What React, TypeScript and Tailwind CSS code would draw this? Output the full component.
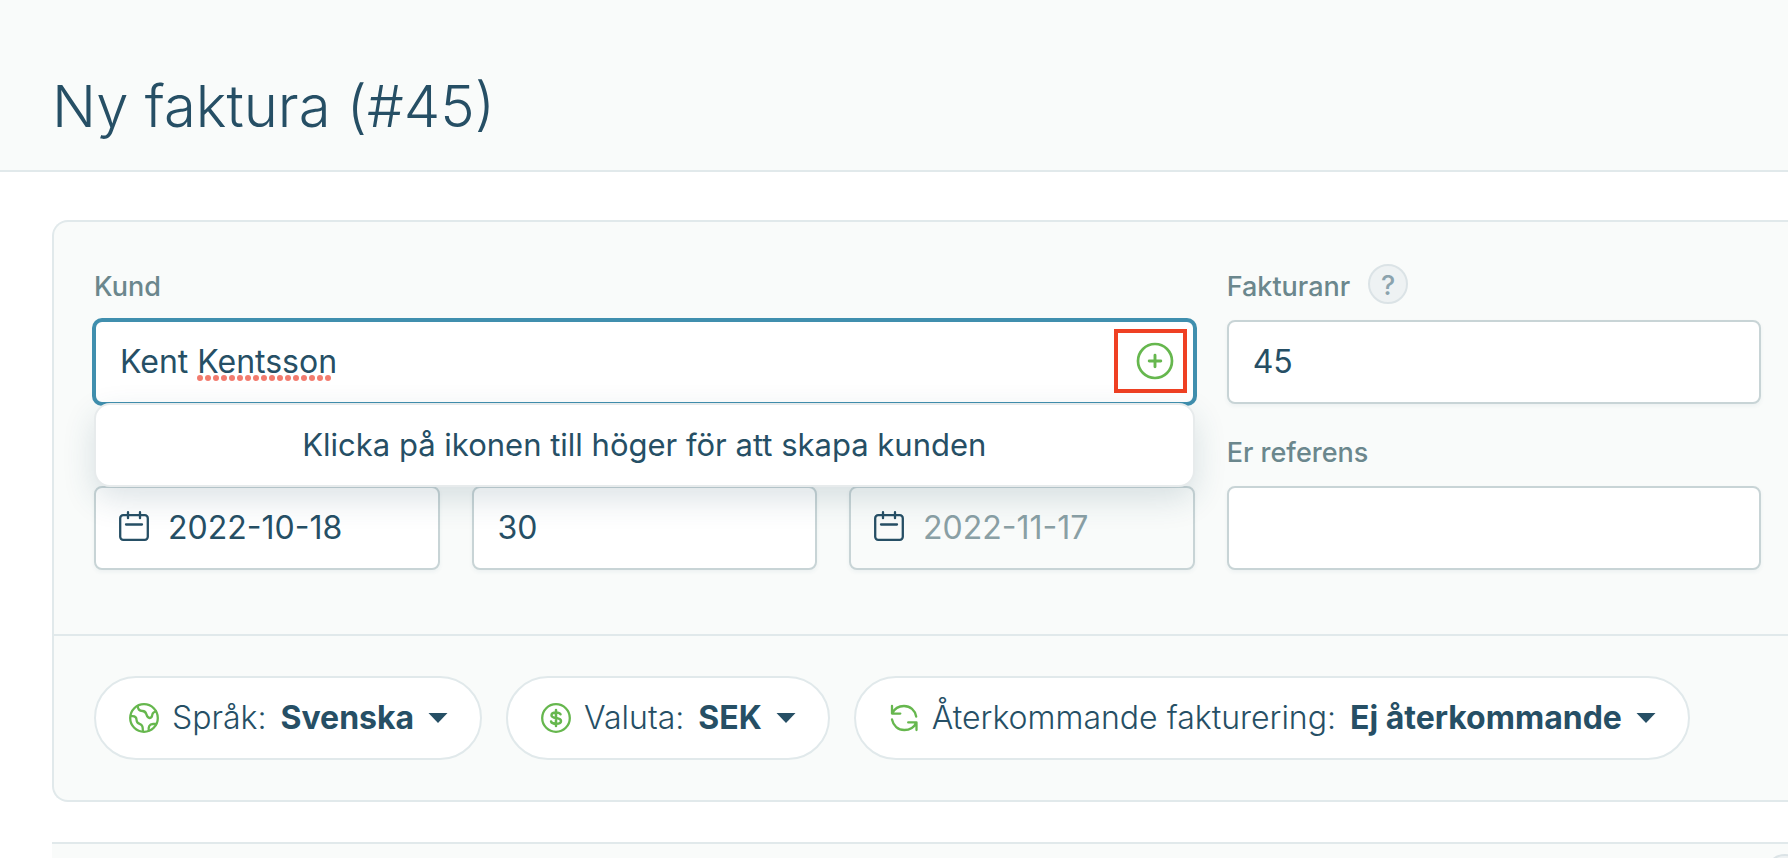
import { ReactNode } from "react";

const fieldClass =
  "block h-[84px] w-full rounded-lg border-2 border-[#c8d4d6] bg-white px-6 pb-0.5 text-[32px] text-[#264f65] shadow-[0_2px_4px_rgba(38,79,101,0.06)] outline-none";

function Label({ htmlFor, children }: { htmlFor: string; children: ReactNode }) {
  return (
    <label htmlFor={htmlFor} className="text-[27px] leading-[46px] font-medium text-[#6b878d]">
      {children}
    </label>
  );
}

function HelpButton({ label, children }: { label: string; children?: ReactNode }) {
  return (
    <button
      type="button"
      aria-label={label}
      className="flex size-10 shrink-0 items-center justify-center rounded-full border-2 border-[#dbe3e6] bg-[#eef2f3] pt-0.5 text-[27px] leading-none font-medium text-[#8ba3ad]"
    >
      {children}
    </button>
  );
}

function CalendarIcon() {
  return (
    <svg viewBox="0 0 32 32" fill="none" stroke="#264f65" strokeWidth="2.300" strokeLinecap="round" className="pointer-events-none absolute top-6 left-6 size-8">
      <rect x="2.200" y="5.200" width="27.600" height="24.600" rx="3" />
      <path d="M10 2.200v6M22 2.200v6M8 14.500h16" />
    </svg>
  );
}

function PlusCircleIcon() {
  return (
    <svg viewBox="0 0 38 38" fill="none" stroke="#66b74e" strokeLinecap="round" className="size-[38px]">
      <circle cx="19" cy="19" r="17" strokeWidth="2.700" />
      <path d="M19 13.200v11.600M13.200 19h11.600" strokeWidth="2.900" />
    </svg>
  );
}

function GlobeIcon() {
  return (
    <svg viewBox="0 0 32 32" fill="none" stroke="#66b74e" strokeWidth="2.300" strokeLinejoin="round" className="size-8">
      <circle cx="16" cy="16" r="13.800" />
      <path d="M9.700 3.700C9.700 7.500 11.500 8.800 14.500 9c3.200.2 3.300 1.500 4 3.700 1.300 4.200 5.200 4.400 5.700.5.300-2.600 1.300-3.700 4.600-3.900" />
      <path d="M2.300 14.200h2.200c3 0 4 1.400 4.100 4 .1 2.300 1 3 3 3.700 3 1 3.300 2.800 3.300 8" />
      <path d="M20.800 29.200c-.7-4.400.5-7.200 4.200-7.200h3.700" />
    </svg>
  );
}

function DollarIcon() {
  return (
    <svg viewBox="0 0 32 32" fill="none" stroke="#66b74e" strokeWidth="2.300" strokeLinecap="round" className="size-8">
      <circle cx="16" cy="16" r="13.800" />
      <path strokeWidth="2.500" d="M20.500 12.300c-.6-1.300-2-1.900-4.500-1.900-2.800 0-4.500 1-4.500 2.800 0 4 9.500 1.800 9.500 5.800 0 1.800-1.800 2.800-4.700 2.800-2.900 0-4.700-.8-5.200-2.300M16 8v16" />
    </svg>
  );
}

function RepeatIcon() {
  return (
    <svg viewBox="0 0 32 32" fill="none" stroke="#66b74e" strokeWidth="2.300" strokeLinecap="round" strokeLinejoin="round" className="size-8">
      <path d="M4 4v7.600h8.300M4.300 11.300C6.500 6.500 10.700 4 16 4c6.300 0 11 4.300 12.200 10.500" />
      <path d="M28.500 28v-7.600h-8.300M28.200 20.700C26 25.500 21.500 28 16.300 28 10 28 5.200 23.700 4 17.500" />
    </svg>
  );
}

function Pill({ icon, label, value }: { icon: ReactNode; label: string; value: string }) {
  return (
    <button
      type="button"
      className="flex h-[84px] items-center rounded-full border-2 border-[#e1e9eb] bg-white px-8 text-[32px] whitespace-nowrap text-[#264f65]"
    >
      {icon}
      <span className="ml-3 font-light">{label}</span>
      <span className="ml-3.5 font-bold">{value}</span>
      <svg viewBox="0 0 20 10" className="ml-3.5 h-[10px] w-5" fill="#264f65">
        <path d="M0.500 0h19L10 10z" />
      </svg>
    </button>
  );
}

export default function App() {
  return (
    <div className="h-screen overflow-hidden bg-white font-['Inter','Liberation_Sans',sans-serif] text-[#264f65]">
      <header className="border-b-2 border-[#e1e9eb] bg-[#f9fbfa] px-[52px] pt-16 pb-[22px]">
        <h1 className="text-[58px] leading-[84px] font-light">Ny faktura (#45)</h1>
      </header>

      <main className="flex flex-col gap-10 pt-12 pl-[52px]">
        <form className="rounded-l-2xl border-y-2 border-l-2 border-[#e1e9eb] bg-[#f9fbfa]">
          <div className="grid grid-cols-3 gap-x-8 gap-y-[22px] pt-[42px] pr-[27px] pb-16 pl-10">
            <div className="col-span-2">
              <div className="flex h-14 items-start">
                <Label htmlFor="kund">Kund</Label>
              </div>
              <div className="relative">
                <input
                  id="kund"
                  defaultValue="Kent Kentsson"
                  spellCheck={false}
                  className="block h-[84px] w-full rounded-lg border-2 border-[#408fae] bg-white px-6 pb-0.5 text-[32px] text-[#264f65] ring-2 ring-[#408fae] outline-none"
                />
                <svg className="pointer-events-none absolute top-[55px] left-[103px] h-1.5 w-[137px]" stroke="#f27b6e" strokeWidth="6" strokeLinecap="round" strokeDasharray="0 8">
                  <path d="M3 3h130" />
                </svg>
                <button
                  type="button"
                  aria-label="Skapa kund"
                  className="absolute top-[9px] right-2 flex h-16 w-[73px] items-center justify-end border-4 border-[#ef4023] pr-[9px]"
                >
                  <PlusCircleIcon />
                </button>
                <div className="absolute top-full right-0 left-0 z-10 -mt-px flex h-[84px] items-center justify-center rounded-2xl border-2 border-[#e7ebec] bg-white text-[31px] shadow-[0_12px_32px_rgba(38,79,101,0.16)]">
                  Klicka på ikonen till höger för att skapa kunden
                </div>
              </div>
            </div>

            <div>
              <div className="flex h-14 items-start gap-[18px]">
                <Label htmlFor="fakturanr">Fakturanr</Label>
                <HelpButton label="Hjälp om fakturanummer">?</HelpButton>
              </div>
              <input id="fakturanr" defaultValue="45" className={fieldClass} />
            </div>

            <div className="col-span-2 grid grid-cols-3 items-end gap-8">
              <div className="relative">
                <input aria-label="Fakturadatum" defaultValue="2022-10-18" className={`${fieldClass} pl-[72px]`} />
                <CalendarIcon />
              </div>
              <input aria-label="Betalningsvillkor" defaultValue="30" className={fieldClass} />
              <div className="relative">
                <input
                  aria-label="Förfallodatum"
                  defaultValue="2022-11-17"
                  readOnly
                  className="block h-[84px] w-full rounded-lg border-2 border-[#c8d4d6] bg-[#f9fbfa] pr-6 pb-0.5 pl-[72px] text-[32px] text-[#8aa0a5] shadow-[0_2px_4px_rgba(38,79,101,0.06)] outline-none"
                />
                <CalendarIcon />
              </div>
            </div>

            <div>
              <div className="flex h-[60px] items-start pt-1">
                <Label htmlFor="referens">Er referens</Label>
              </div>
              <input id="referens" className={fieldClass} />
            </div>
          </div>

          <div className="flex gap-6 border-t-2 border-[#e1e9eb] py-10 pl-10">
            <Pill icon={<GlobeIcon />} label="Språk:" value="Svenska" />
            <Pill icon={<DollarIcon />} label="Valuta:" value="SEK" />
            <Pill icon={<RepeatIcon />} label="Återkommande fakturering:" value="Ej återkommande" />
          </div>
        </form>

        <section className="flex h-24 justify-end overflow-hidden border-t-2 border-[#e1e9eb] bg-[#f9fbfa] pt-[10px]">
          <div className="-mr-[17px]">
            <HelpButton label="Hjälp om rader" />
          </div>
        </section>
      </main>
    </div>
  );
}
